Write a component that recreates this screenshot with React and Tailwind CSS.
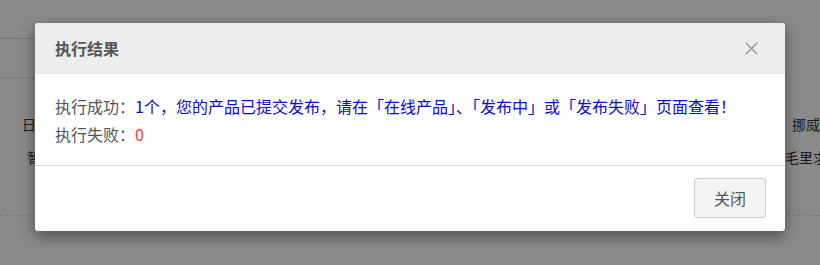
import { X } from 'lucide-react';

const rows = [
  { left: '日本', leftPad: 'pl-[22px]', right: '挪威', rightAt: 'w-[792px]' },
  { left: '智利', leftPad: 'pl-[27px]', right: '毛里求斯', rightAt: 'w-[785px]' }
];

function BackgroundPage() {
  return (
    <div className="h-[265px] w-[820px] overflow-hidden bg-white text-[14px] text-[#333]">
      <div className="h-[39px] w-[500px] border-b border-[#dcdcdc]" />
      <div className="h-[39px] w-[500px] border-b border-[#dcdcdc]" />
      <div className="pt-[30px]">
        {rows.map((row) => (
          <div key={row.left} className="flex h-[33px] items-center whitespace-nowrap">
            <div className={`${row.rightAt} shrink-0 ${row.leftPad}`}>{row.left}</div>
            <div>{row.right}</div>
          </div>
        ))}
      </div>
      <div className="mt-[41px] border-b border-dashed border-[#e0e0e0]" />
    </div>
  );
}

function ResultDialog() {
  return (
    <div className="mx-auto mt-[23px] w-[750px] rounded-[3px] bg-white shadow-[0_5px_15px_rgba(0,0,0,0.45)]">
      <div className="flex h-[51px] items-center justify-between rounded-t-[3px] border-b border-[#e3e3e3] bg-[#ededed] pl-[20px] pr-[23px]">
        <h3 className="text-[16px] font-bold text-[#555]">执行结果</h3>
        <button type="button" className="text-[#999]">
          <X size={21} strokeWidth={1.7} />
        </button>
      </div>
      <div className="border-b border-[#dedede] px-[20px] pb-[17px] pt-[18px] text-[16px] leading-[28px] text-[#555]">
        <p>
          执行成功：<span className="text-[#0a0ad0]">1个，您的产品已提交发布，请在「在线产品」、「发布中」或「发布失败」页面查看！</span>
        </p>
        <p>
          执行失败：<span className="text-[#ff3b3b]">0</span>
        </p>
      </div>
      <div className="flex justify-end pb-[13px] pr-[19px] pt-[12px]">
        <button
          type="button"
          className="h-[40px] w-[72px] rounded-[3px] border border-[#cccccc] bg-[#f4f4f4] text-[16px] text-[#555]"
        >
          关闭
        </button>
      </div>
    </div>
  );
}

export default function App() {
  return (
    <div
      className="relative h-[265px] w-[820px] overflow-hidden"
      style={{ fontFamily: '"Noto Sans CJK SC", "Noto Sans", sans-serif' }}
    >
      <BackgroundPage />
      <div className="absolute inset-0 bg-black/[0.46]">
        <ResultDialog />
      </div>
    </div>
  );
}
